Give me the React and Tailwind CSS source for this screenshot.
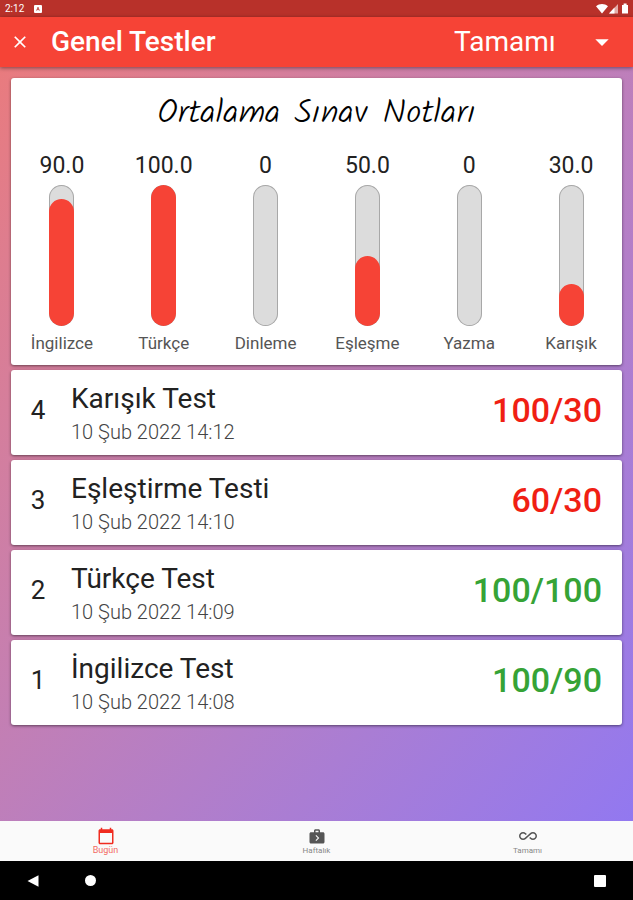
import { useState } from "react";
import { MdAllInclusive, MdArrowDropDown, MdCalendarToday, MdClose, MdNextWeek } from "react-icons/md";

const averages = [
  { label: "İngilizce", text: "90.0", value: 90 },
  { label: "Türkçe", text: "100.0", value: 100 },
  { label: "Dinleme", text: "0", value: 0 },
  { label: "Eşleşme", text: "50.0", value: 50 },
  { label: "Yazma", text: "0", value: 0 },
  { label: "Karışık", text: "30.0", value: 30 },
];

const tests = [
  { id: 4, title: "Karışık Test", date: "10 Şub 2022 14:12", score: "100/30", passed: false },
  { id: 3, title: "Eşleştirme Testi", date: "10 Şub 2022 14:10", score: "60/30", passed: false },
  { id: 2, title: "Türkçe Test", date: "10 Şub 2022 14:09", score: "100/100", passed: true },
  { id: 1, title: "İngilizce Test", date: "10 Şub 2022 14:08", score: "100/90", passed: true },
];

const tabs = [
  { id: "today", label: "Bugün", Icon: MdCalendarToday },
  { id: "week", label: "Haftalık", Icon: MdNextWeek },
  { id: "all", label: "Tamamı", Icon: MdAllInclusive },
];

function StatusBar() {
  return (
    <div className="flex h-[17px] items-center justify-between bg-[#b8312a] pl-[5px] pr-1 text-white">
      <div className="flex items-center gap-[10px]">
        <span className="text-[10px] leading-none">2:12</span>
        <svg className="size-2" viewBox="0 0 8 8">
          <rect width="8" height="8" rx="1" fill="white" />
          <path d="M2.6 5.6 4 2.2l1.4 3.4M3.1 4.6h1.8" fill="none" stroke="#b8312a" strokeWidth="0.8" />
        </svg>
      </div>
      <svg className="h-[11px] w-[33px]" viewBox="0 0 33 11" fill="white">
        <path d="M0 3.2C3.6.2 8.4.2 12 3.2L6 10.4z" />
        <path d="M13 10.4 22 1v9.400z" fillOpacity="0.6" />
        <path d="M13 10.400 18.500 4.600v5.800z" />
        <path d="M26 2h1.600V.6h3V2h1.400v8.400h-6z" />
      </svg>
    </div>
  );
}

function Header() {
  return (
    <header className="relative z-10 flex h-[50px] items-center bg-[#f64336] text-white shadow-[0_1px_4px_rgba(0,0,0,0.45)]">
      <button type="button" aria-label="Kapat" className="flex w-10 justify-center">
        <MdClose className="size-5" />
      </button>
      <h1 className="flex-1 pl-[11px] text-[28px] font-medium leading-8">Genel Testler</h1>
      <div className="relative mr-[15px] w-[164px]">
        <select
          aria-label="Test türü"
          className="w-full appearance-none bg-transparent text-[28px] leading-8 outline-none"
        >
          <option>Tamamı</option>
        </select>
        <MdArrowDropDown className="pointer-events-none absolute right-0 top-0 size-8" />
      </div>
    </header>
  );
}

function AverageBar({ label, text, value }) {
  return (
    <div className="flex flex-col items-center">
      <span className="text-[23px] leading-7 text-[#222]">{text}</span>
      <div className="mt-[5px] flex h-[141px] w-[25px] flex-col justify-end overflow-hidden rounded-full bg-[#dcdcdc] shadow-[inset_0_0_0_1px_#a8a8a8]">
        <div className="rounded-full bg-[#f64336]" style={{ height: `${value}%` }} />
      </div>
      <span className="mt-[7px] text-[17px] leading-5 text-[#555]">{label}</span>
    </div>
  );
}

function TestCard({ id, title, date, score, passed }) {
  return (
    <li className="flex h-[85px] items-center rounded-[3px] bg-white pr-5 shadow-[0_1px_3px_rgba(0,0,0,0.5)]">
      <span className="w-[54px] pb-[6px] text-center text-[26px] leading-8 text-[#222]">{id}</span>
      <div className="flex-1 pl-[6px] pt-[2px]">
        <h2 className="text-[28px] leading-9 text-[#222]">{title}</h2>
        <p className="text-xl font-light leading-[30px] text-[#444]">{date}</p>
      </div>
      <span className={`pb-[6px] text-[34px] font-medium leading-10 ${passed ? "text-[#36a336]" : "text-[#f01f14]"}`}>
        {score}
      </span>
    </li>
  );
}

function BottomTabs() {
  const [active, setActive] = useState("today");

  return (
    <nav className="grid h-10 grid-cols-3 bg-[#fafafa]">
      {tabs.map(({ id, label, Icon }) => (
        <button
          key={id}
          type="button"
          onClick={() => setActive(id)}
          className={`flex flex-col items-center pt-[6px] ${active === id ? "text-[#f02c20]" : "text-[#555]"}`}
        >
          <Icon className="size-[18px]" />
          <span className={`leading-[11px] opacity-70 ${active === id ? "text-[9px]" : "text-[8px]"}`}>{label}</span>
        </button>
      ))}
    </nav>
  );
}

function SystemNav() {
  return (
    <div className="flex h-[39px] items-center bg-black pl-[27px] pr-[27px] text-white">
      <button type="button" aria-label="Geri">
        <svg className="size-3" viewBox="0 0 12 12" fill="currentColor">
          <path d="M.5 6 11.500.2v11.600z" />
        </svg>
      </button>
      <button type="button" aria-label="Ana ekran" className="ml-[46px] size-[11px] rounded-full bg-white" />
      <button type="button" aria-label="Son uygulamalar" className="ml-auto size-3 rounded-[1px] bg-white" />
    </div>
  );
}

export default function App() {
  return (
    <div className="flex min-h-screen flex-col font-['Roboto',sans-serif]">
      <StatusBar />
      <Header />
      <main className="flex flex-1 flex-col gap-[5px] bg-linear-to-br from-[#e97b7e] to-[#9278f0] px-[11px] pt-[11px]">
        <section className="rounded-[3px] bg-white pb-3 pt-4 shadow-[0_1px_3px_rgba(0,0,0,0.5)]">
          <h2 className="text-center font-['Kalam',cursive] text-[34px] font-light leading-10 text-black">
            Ortalama Sınav Notları
          </h2>
          <div className="mt-[18px] grid grid-cols-6">
            {averages.map((item) => (
              <AverageBar key={item.label} {...item} />
            ))}
          </div>
        </section>
        <ul className="flex flex-col gap-[5px]">
          {tests.map((test) => (
            <TestCard key={test.id} {...test} />
          ))}
        </ul>
      </main>
      <BottomTabs />
      <SystemNav />
    </div>
  );
}
